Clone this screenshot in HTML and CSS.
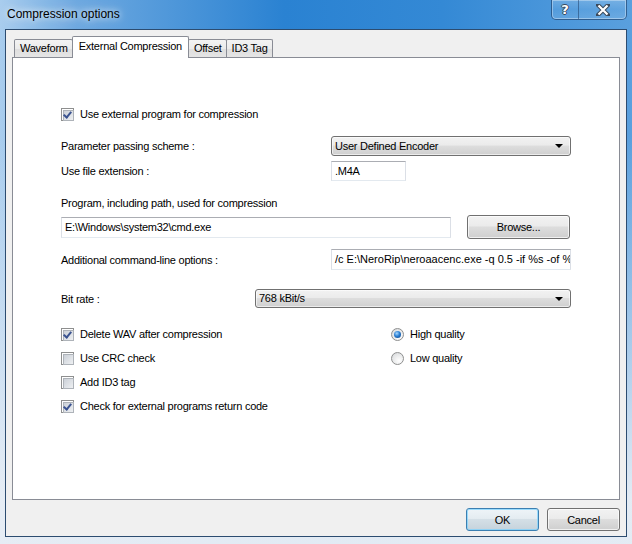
FILE: index.html
```html
<!DOCTYPE html>
<html lang="en">
<head>
    <meta charset="UTF-8">
    <title>Compression options</title>
    <link rel="stylesheet" href="styles.css">
</head>
<body>
    <div class="window">
        <div class="titlebar">
            <span class="title">Compression options</span>
            <div class="caption-buttons">
                <div class="cap-btn help"><span>?</span></div>
                <div class="cap-btn close">
                    <svg width="14" height="12" viewBox="0 0 14 12">
                        <path d="M2 1 L12 11 M12 1 L2 11" stroke="#3b4a5c" stroke-width="4.2" stroke-linecap="square"/>
                        <path d="M2.5 1.5 L11.5 10.5 M11.5 1.5 L2.5 10.5" stroke="#fff" stroke-width="2.2"/>
                    </svg>
                </div>
            </div>
        </div>

        <div class="client">
            <div class="tabs">
                <div class="tab">Waveform</div>
                <div class="tab active">External Compression</div>
                <div class="tab">Offset</div>
                <div class="tab">ID3 Tag</div>
            </div>

            <div class="panel">
                <div class="row row-use">
                    <span class="check checked"></span>
                    <span>Use external program for compression</span>
                </div>

                <div class="row row-scheme">
                    <span class="label">Parameter passing scheme :</span>
                    <div class="combo combo-scheme">User Defined Encoder</div>
                </div>

                <div class="row row-ext">
                    <span class="label">Use file extension :</span>
                    <div class="textbox textbox-ext">.M4A</div>
                </div>

                <div class="row row-prog-label">
                    <span>Program, including path, used for compression</span>
                </div>

                <div class="row row-prog">
                    <div class="textbox textbox-prog">E:\Windows\system32\cmd.exe</div>
                    <button class="btn btn-browse">Browse...</button>
                </div>

                <div class="row row-extra">
                    <span class="label">Additional command-line options :</span>
                    <div class="textbox textbox-extra">/c E:\NeroRip\neroaacenc.exe -q 0.5 -if %s -of %d</div>
                </div>

                <div class="row row-bitrate">
                    <span class="label label-short">Bit rate :</span>
                    <div class="combo combo-bitrate">768 kBit/s</div>
                </div>

                <div class="options">
                    <div class="col-left">
                        <div class="opt"><span class="check checked"></span>Delete WAV after compression</div>
                        <div class="opt"><span class="check"></span>Use CRC check</div>
                        <div class="opt"><span class="check"></span>Add ID3 tag</div>
                        <div class="opt"><span class="check checked"></span>Check for external programs return code</div>
                    </div>
                    <div class="col-right">
                        <div class="opt"><span class="radio selected"></span>High quality</div>
                        <div class="opt"><span class="radio"></span>Low quality</div>
                    </div>
                </div>
            </div>

            <div class="dialog-buttons">
                <button class="btn btn-default">OK</button>
                <button class="btn">Cancel</button>
            </div>
        </div>
    </div>
</body>
</html>
```

FILE: styles.css
```css
* {
    box-sizing: border-box;
}
body {
    margin: 0;
    width: 632px;
    height: 544px;
    overflow: hidden;
    font-family: "Liberation Sans", Arial, sans-serif;
    font-size: 11px;
    letter-spacing: -0.25px;
    color: #000;
}
.window {
    height: 544px;
    display: flex;
    flex-direction: column;
    background:
        linear-gradient(to bottom, rgba(232, 238, 245, 0) 0%, rgba(232, 238, 245, 0) 25%, rgba(232, 238, 245, 0.97) 92%),
        linear-gradient(to right, #a9cdee 0%, #6ea9e0 12%, #2a82d2 45%, #3489d5 70%, #5aa0de 100%);
}

/* title bar */
.titlebar {
    height: 29px;
    display: flex;
    align-items: flex-start;
}
.title {
    font-size: 12px;
    letter-spacing: 0;
    line-height: 14px;
    padding: 7px 0 0 7px;
    text-shadow: 0 0 6px rgba(255, 255, 255, 0.9), 0 0 12px rgba(255, 255, 255, 0.7);
}
.caption-buttons {
    margin-left: auto;
    margin-right: 5px;
    display: flex;
    height: 20px;
    border: 1px solid rgba(25, 55, 95, 0.6);
    border-top: none;
    border-radius: 0 0 5px 5px;
    box-shadow: inset 0 0 0 1px rgba(255, 255, 255, 0.35);
    overflow: hidden;
}
.cap-btn {
    display: flex;
    align-items: center;
    justify-content: center;
    background: linear-gradient(rgba(255, 255, 255, 0.18), rgba(255, 255, 255, 0.05) 50%, rgba(255, 255, 255, 0.12));
}
.cap-btn.help {
    width: 27px;
    border-right: 1px solid rgba(25, 55, 95, 0.5);
}
.cap-btn.help span {
    font-family: "DejaVu Sans", sans-serif;
    font-weight: bold;
    font-size: 13px;
    line-height: 13px;
    color: #fff;
    text-shadow: 1px 0 0 #3b4a5c, -1px 0 0 #3b4a5c, 0 1px 0 #3b4a5c, 0 -1px 0 #3b4a5c;
}
.cap-btn.close {
    width: 47px;
}

/* client area */
.client {
    height: 508px;
    margin: 0 5px;
    padding: 0 6px;
    background: #f0f0f0;
    border: 1px solid #2c4c70;
    display: flex;
    flex-direction: column;
}
.tabs {
    display: flex;
    align-items: flex-end;
    height: 21px;
    margin: 6px 0 0 2px;
    position: relative;
    z-index: 1;
}
.tab {
    height: 18px;
    padding: 0 4px 0 5px;
    line-height: 16px;
    border: 1px solid #898c95;
    border-bottom: none;
    border-radius: 2px 2px 0 0;
    background: linear-gradient(#f3f3f3, #ebebeb 50%, #dedede 50%, #e5e5e5);
    margin-right: -1px;
}
.tab.active {
    height: 22px;
    margin-bottom: -1px;
    padding: 0 6px;
    line-height: 19px;
    background: #fff;
    position: relative;
    z-index: 2;
}
.panel {
    height: 443px;
    background: #fff;
    border: 1px solid #898c95;
    padding: 46px 48px 0 48px;
}

/* rows */
.row {
    display: flex;
    align-items: center;
}
.label {
    width: 270px;
}
.label-short {
    width: 194px;
}
.row-use {
    height: 20px;
}
.row-scheme {
    height: 20px;
    margin-top: 12px;
}
.row-ext {
    height: 20px;
    margin-top: 5px;
}
.row-prog-label {
    height: 16px;
    margin-top: 14px;
}
.row-prog {
    height: 24px;
    margin-top: 4px;
}
.row-extra {
    height: 21px;
    margin-top: 10px;
}
.row-bitrate {
    height: 19px;
    margin-top: 19px;
}

/* controls */
.combo {
    position: relative;
    height: 20px;
    line-height: 18px;
    padding-left: 3px;
    border: 1px solid #707070;
    border-radius: 3px;
    background: linear-gradient(#f2f2f2 0%, #ebebeb 45%, #dddddd 50%, #cfcfcf 100%);
    box-shadow: inset 0 0 0 1px rgba(255, 255, 255, 0.6);
}
.combo::after {
    content: "";
    position: absolute;
    right: 7px;
    top: 7px;
    border-left: 4px solid transparent;
    border-right: 4px solid transparent;
    border-top: 4px solid #000;
}
.combo-scheme {
    width: 240px;
}
.combo-bitrate {
    width: 316px;
    height: 19px;
    line-height: 17px;
}
.textbox {
    height: 21px;
    line-height: 19px;
    padding-left: 3px;
    background: #fff;
    border: 1px solid #dbdfe6;
    border-top-color: #abadb3;
    border-bottom-color: #e3e9ef;
    white-space: nowrap;
    overflow: hidden;
}
.textbox-ext {
    width: 75px;
    height: 20px;
    line-height: 18px;
}
.textbox-prog {
    width: 390px;
}
.textbox-extra {
    width: 240px;
    letter-spacing: 0;
}
.btn {
    height: 23px;
    width: 73px;
    padding: 0;
    font: inherit;
    letter-spacing: inherit;
    color: #000;
    border: 1px solid #707070;
    border-radius: 3px;
    background: linear-gradient(#f2f2f2 0%, #ebebeb 45%, #dddddd 50%, #cfcfcf 100%);
    box-shadow: inset 0 0 0 1px rgba(255, 255, 255, 0.7);
}
.btn-browse {
    width: 103px;
    height: 24px;
    margin-left: 16px;
}
.btn-default {
    border-color: #3c7fb1;
    background: linear-gradient(#eef4f8 0%, #e4ecf1 45%, #d4dfe6 50%, #c6d3dc 100%);
    box-shadow: inset 0 0 0 1px rgba(120, 210, 255, 0.7);
}
.dialog-buttons {
    display: flex;
    justify-content: flex-end;
    gap: 8px;
    margin-top: 8px;
}

/* check boxes and radios */
.check {
    position: relative;
    flex: none;
    width: 13px;
    height: 13px;
    margin-right: 6px;
    border: 1px solid #8e8f8f;
    background: #fff;
}
.check::before {
    content: "";
    position: absolute;
    left: 1px;
    top: 1px;
    width: 9px;
    height: 9px;
    border: 1px solid #aeb3b9;
    background: linear-gradient(135deg, #cbd0d7, #eef0f2);
}
.check.checked::after {
    content: "";
    position: absolute;
    left: 3px;
    top: 1px;
    width: 3px;
    height: 6px;
    border: solid #3b5390;
    border-width: 0 2px 2px 0;
    transform: rotate(40deg);
}
.radio {
    position: relative;
    flex: none;
    width: 13px;
    height: 13px;
    margin-right: 6px;
    border: 1px solid #8e8f8f;
    border-radius: 50%;
    background: radial-gradient(circle at 65% 70%, #fff 0%, #e6e7e8 60%, #cfd2d6 100%);
}
.radio.selected::after {
    content: "";
    position: absolute;
    left: 2px;
    top: 2px;
    width: 7px;
    height: 7px;
    border-radius: 50%;
    background: radial-gradient(circle at 40% 35%, #a6d8ff 0%, #2b7fd3 45%, #0c3d7c 100%);
}
.options {
    display: flex;
    margin-top: 14px;
}
.col-left {
    width: 330px;
}
.opt {
    display: flex;
    align-items: center;
    height: 24px;
}
```
